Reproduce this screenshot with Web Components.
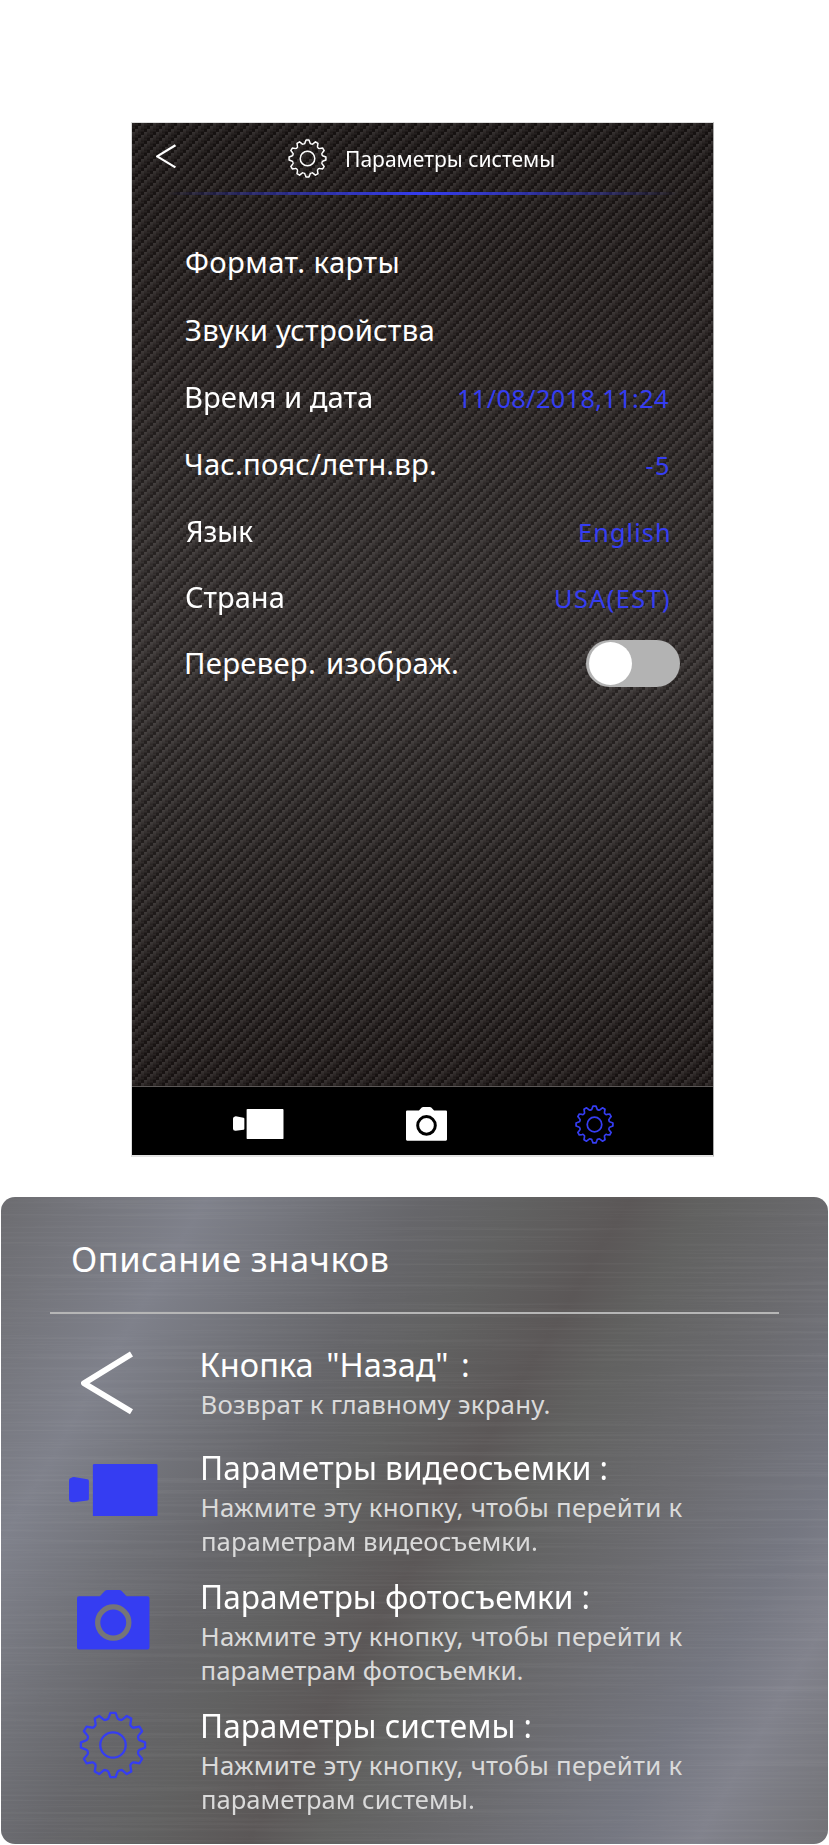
<!DOCTYPE html>
<html lang="ru">
<head>
<meta charset="utf-8">
<title>Параметры системы</title>
<style>
html,body{margin:0;padding:0;background:#fff}
body{font-family:"Noto Sans","Open Sans",sans-serif;width:829px;height:1845px;overflow:hidden}
</style>
</head>
<body>
<manual-page></manual-page>
<script>
const define=(name,html,ready)=>{
  const t=document.createElement('template');
  t.innerHTML=html;
  customElements.define(name,class extends HTMLElement{
    constructor(){super();this.attachShadow({mode:'open'}).appendChild(t.content.cloneNode(true));}
    connectedCallback(){if(ready)ready(this,this.shadowRoot);}
  });
};

// One line of text whose ink spans exactly the width given in "w".
const ctx=document.createElement('canvas').getContext('2d');
define('fit-text',`<style>
:host{display:inline-block;white-space:nowrap;flex:none}
span{display:inline-block;transform-origin:0 50%;white-space:pre}
</style><span><slot></slot></span>`,(el,root)=>{
  const w=+el.getAttribute('w'),size=+el.getAttribute('size'),text=el.textContent;
  const gap=+(el.getAttribute('gap')||0);
  ctx.font=size+'px "Noto Sans","Open Sans",sans-serif';
  const m=ctx.measureText(text);
  const left=-m.actualBoundingBoxLeft,ink=m.actualBoundingBoxRight-left+gap*(text.split(' ').length-1);
  const s=root.querySelector('span');
  let k=1;
  if(gap)s.style.wordSpacing=gap+'px';
  if(ink>w){k=w/ink;s.style.transform='scaleX('+k+')';}
  else s.style.letterSpacing=(w-ink)/(text.length-1)+'px';
  s.style.marginLeft=(-left*k)+'px';
  el.style.fontSize=size+'px';
  el.style.width=w+'px';
});

// Outline of a twelve-tooth gear around the origin.
const gearPath=()=>{
  let d='';
  const p=(r,a)=>{a=a*Math.PI/180;return (r*Math.sin(a)).toFixed(2)+' '+(-r*Math.cos(a)).toFixed(2);};
  for(let i=0;i<12;i++){
    const a=i*30;
    d+=(i?'L':'M')+p(32.2,a-4.6)+'L'+p(32.2,a+4.6)+'L'+p(27.8,a+9)+'Q'+p(26.2,a+10.5)+' '+p(26.2,a+13)+'L'+p(26.2,a+17)+'Q'+p(26.2,a+19.5)+' '+p(27.8,a+21);
  }
  return d+'Z';
};
define('gear-icon',`<style>:host{display:block;width:var(--s,39px);height:var(--s,39px)}svg{display:block;width:100%;height:100%}</style>
<svg viewBox="-34 -34 68 68" fill="none" stroke="currentColor" stroke-linejoin="round"><path/><circle r="12.7"/></svg>`,
(el,root)=>{root.querySelector('path').setAttribute('d',gearPath());root.querySelector('svg').setAttribute('stroke-width',el.getAttribute('weight')||2.6);});
define('video-icon',`<style>:host{display:block;width:var(--s,51px)}svg{display:block;width:100%}</style>
<svg viewBox="0 0 89 53" fill="currentColor"><path d="M2 14Q3 13 5 13L18.500 15.300Q20 15.600 20 17V35Q20 36.600 18.500 36.800L5 38.500Q0 39 0 35V17Q0 14 2 14Z"/><rect x="24" width="65" height="53" rx="1.500"/></svg>`);
define('camera-icon',`<style>:host{display:block;width:var(--s,41px)}svg{display:block;width:100%}</style>
<svg viewBox="0 0 73 60"><path fill="currentColor" d="M2 6.200H23L28 1Q29 0 30.500 0H42.500Q44 0 45 1L50 6.200H71Q73 6.200 73 8.200V58Q73 60 71 60H2Q0 60 0 58V8.200Q0 6.200 2 6.200Z"/><circle cx="36.500" cy="32.800" r="15.700" fill="none" stroke="var(--ring,#757578)" stroke-width="5.300"/></svg>`);
define('back-icon',`<style>:host{display:block;width:var(--s,52px)}svg{display:block;width:100%}</style>
<svg viewBox="0 0 52 64" fill="none" stroke="currentColor" stroke-width="5.900" stroke-linejoin="round"><path d="M50.500 3L3 32.200L50.500 60.800"/></svg>`);

define('toggle-switch',`<style>
:host{display:block;box-sizing:border-box;width:94px;height:47px;border-radius:24px;background:#b3b3b3;padding:2px 3px}
i{display:block;width:43px;height:43px;border-radius:50%;background:#fff}
</style><i></i>`);

define('setting-row',`<style>
:host{display:flex;justify-content:space-between;align-items:baseline;height:67px;line-height:67px;color:#fff}
::slotted([slot=value]){color:#353df2}
</style><slot></slot><slot name="value"></slot>`);

define('screen-header',`<style>
:host{display:block;height:72px}
.r{display:flex;height:69px;align-items:flex-start;color:#fff;padding-left:24px}
back-icon{--s:20px;margin-top:21px}
back-icon,gear-icon{flex:none}
gear-icon{margin:16px 19px 0 112px}
fit-text{line-height:50px;margin:11px 0 0 1px}
hr{margin:0 24px;border:0;height:3px;background:linear-gradient(90deg,rgba(53,61,242,0) 2%,rgba(53,61,242,.62) 30%,#353df2 50%,rgba(53,61,242,.62) 70%,rgba(53,61,242,0) 98%)}
</style><div class="r"><back-icon></back-icon><gear-icon></gear-icon><fit-text w="207" size="21.5">Параметры системы</fit-text></div><hr>`);

define('tab-bar',`<style>
:host{display:flex;box-sizing:border-box;height:69px;background:#000;border-top:1px solid #5c5857;align-items:flex-start;color:#fff;padding-left:101px}
video-icon{--s:50.5px;margin-top:21.5px}
camera-icon{--s:41px;--ring:#000;margin:20px 0 0 122px}
gear-icon{color:#353df2;margin:17.5px 0 0 128px}
</style><video-icon></video-icon><camera-icon></camera-icon><gear-icon weight="3"></gear-icon>`);

define('carbon-weave',`<style>:host{display:block;position:absolute;inset:0}svg{display:block;width:100%;height:100%}</style>
<svg><defs>
<linearGradient id="c" x1="0" y1="0" x2="0" y2="1"><stop offset="0" stop-color="#fff" stop-opacity=".13"/><stop offset=".3" stop-color="#fff" stop-opacity=".08"/><stop offset=".55" stop-color="#fff" stop-opacity=".02"/><stop offset=".75" stop-color="#000" stop-opacity=".2"/><stop offset="1" stop-color="#000" stop-opacity=".1"/></linearGradient>
<pattern id="p" width="12" height="12" patternUnits="userSpaceOnUse" shape-rendering="crispEdges"><g fill="url(#c)">
<rect x="0" y="-3" width="3" height="12"/><rect x="0" y="9" width="3" height="12"/>
<rect x="3" y="-6" width="3" height="12"/><rect x="3" y="6" width="3" height="12"/>
<rect x="6" y="-9" width="3" height="12"/><rect x="6" y="3" width="3" height="12"/>
<rect x="9" y="0" width="3" height="12"/></g></pattern></defs>
<rect width="100%" height="100%" fill="url(#p)"/></svg>`);

define('phone-screen',`<style>
:host{display:flex;flex-direction:column;box-sizing:border-box;width:583px;height:1035px;margin-left:131px;border:1px solid #dcdcdc;border-right-color:#aaa;border-bottom:2px solid #e2e2e2}
.main{position:relative;flex:1;background:linear-gradient(#191413,#211b1a 18%,#2d2827 45%,#2f2a29 58%,#231e1d 82%,#1b1514)}
.in{position:relative}
.list{padding:33.5px 44px 0 54px}
.h68{height:68px}.h66{height:66px}
toggle-switch{align-self:flex-start;margin:10.5px -11px 0 0}
</style>
<div class="main"><carbon-weave></carbon-weave><div class="in"><screen-header></screen-header><div class="list">
<setting-row class="h68"><fit-text w="211.5" size="29.3">Формат. карты</fit-text></setting-row>
<setting-row><fit-text w="246.5" size="29.3">Звуки устройства</fit-text></setting-row>
<setting-row><fit-text w="185" size="29.3">Время и дата</fit-text><fit-text slot="value" w="210" size="25.4">11/08/2018,11:24</fit-text></setting-row>
<setting-row><fit-text w="249" size="29.3">Час.пояс/летн.вр.</fit-text><fit-text slot="value" w="22.5" size="25.4">-5</fit-text></setting-row>
<setting-row class="h66"><fit-text w="67.5" size="29.3">Язык</fit-text><fit-text slot="value" w="89" size="25.4">English</fit-text></setting-row>
<setting-row class="h66"><fit-text w="96.5" size="29.3">Страна</fit-text><fit-text slot="value" w="113" size="25.4">USA(EST)</fit-text></setting-row>
<setting-row><fit-text w="271" size="29.3" gap="2">Перевер. изображ.</fit-text><toggle-switch slot="value"></toggle-switch></setting-row>
</div></div></div><tab-bar></tab-bar>`);

define('legend-item',`<style>
:host{display:grid;grid-template-columns:201.5px 1fr;height:129px;color:#fff}
.ic{display:flex;justify-content:center;align-items:flex-start}
.tx{padding-top:4.5px}
.t{line-height:44px;height:44px}
.s{color:#dadada;line-height:34px}
::slotted(fit-text){vertical-align:top}
</style><div class="ic"><slot name="icon"></slot></div><div class="tx"><div class="t"><slot name="title"></slot></div><div class="s"><slot></slot></div></div>`);

define('metal-surface',`<style>:host{display:block;position:absolute;inset:0;border-radius:14px;overflow:hidden;background:linear-gradient(120.8deg,#6c6c70 0,#7f818b 17%,#6f7076 28%,#66666a 35%,#616161 43%,#5b5757 52%,#616160 58%,#6b6b6f 70%,#757781 82%,#81828c 89%,#727276 100%)}svg{display:block;width:100%;height:100%}</style>
<svg><filter id="n" x="0" y="0" width="100%" height="100%"><feTurbulence type="fractalNoise" baseFrequency="0.003 0.4" numOctaves="3" seed="7"/><feColorMatrix values="0 0 0 0 1  0 0 0 0 1  0 0 0 0 1  1.100 0 0 0 -.49"/></filter><rect width="100%" height="100%" filter="url(#n)" opacity=".11"/></svg>`);

define('icon-legend',`<style>
:host{display:block;position:relative;box-sizing:border-box;width:827px;height:647px;margin:40px 0 0 1px;border-radius:14px}
.in{position:relative;color:#fff}
h1{margin:0;font-weight:400;line-height:60px;height:115px;padding:32px 0 0 72px;box-sizing:border-box}
hr{margin:0 49px;border:0;height:2px;background:#b6b6b6}
.b{padding-top:24px}
.first{height:103px}
video-icon{--s:89px;margin:22.500px 45px 0 68px}
camera-icon{--s:72.500px;margin:20px 0 0 23px}
gear-icon{--s:68px;margin:11.500px 0 0 23px}
back-icon{--s:52px;margin:13px 0 0 11px}
video-icon,camera-icon,gear-icon{color:#353df2}
</style><metal-surface></metal-surface><div class="in"><h1><fit-text w="314.500" size="34.5">Описание значков</fit-text></h1><hr><div class="b">
<legend-item class="first"><back-icon slot="icon"></back-icon><fit-text slot="title" w="265.500" size="32.5" gap="4">Кнопка "Назад" :</fit-text><fit-text w="347" size="25.8">Возврат к главному экрану.</fit-text></legend-item>
<legend-item><video-icon slot="icon"></video-icon><fit-text slot="title" w="403.500" size="32.5">Параметры видеосъемки :</fit-text><fit-text w="480" size="25.8">Нажмите эту кнопку, чтобы перейти к</fit-text><br><fit-text w="334" size="25.8">параметрам видеосъемки.</fit-text></legend-item>
<legend-item><camera-icon slot="icon"></camera-icon><fit-text slot="title" w="385.500" size="32.5">Параметры фотосъемки :</fit-text><fit-text w="480" size="25.8">Нажмите эту кнопку, чтобы перейти к</fit-text><br><fit-text w="320" size="25.8">параметрам фотосъемки.</fit-text></legend-item>
<legend-item><gear-icon slot="icon" weight="2.3"></gear-icon><fit-text slot="title" w="327.500" size="32.5">Параметры системы :</fit-text><fit-text w="480" size="25.8">Нажмите эту кнопку, чтобы перейти к</fit-text><br><fit-text w="271" size="25.8">параметрам системы.</fit-text></legend-item>
</div></div>`);

define('manual-page',`<style>:host{display:block;box-sizing:border-box;width:829px;height:1845px;padding-top:122px}</style><phone-screen></phone-screen><icon-legend></icon-legend>`);
</script>
</body>
</html>
